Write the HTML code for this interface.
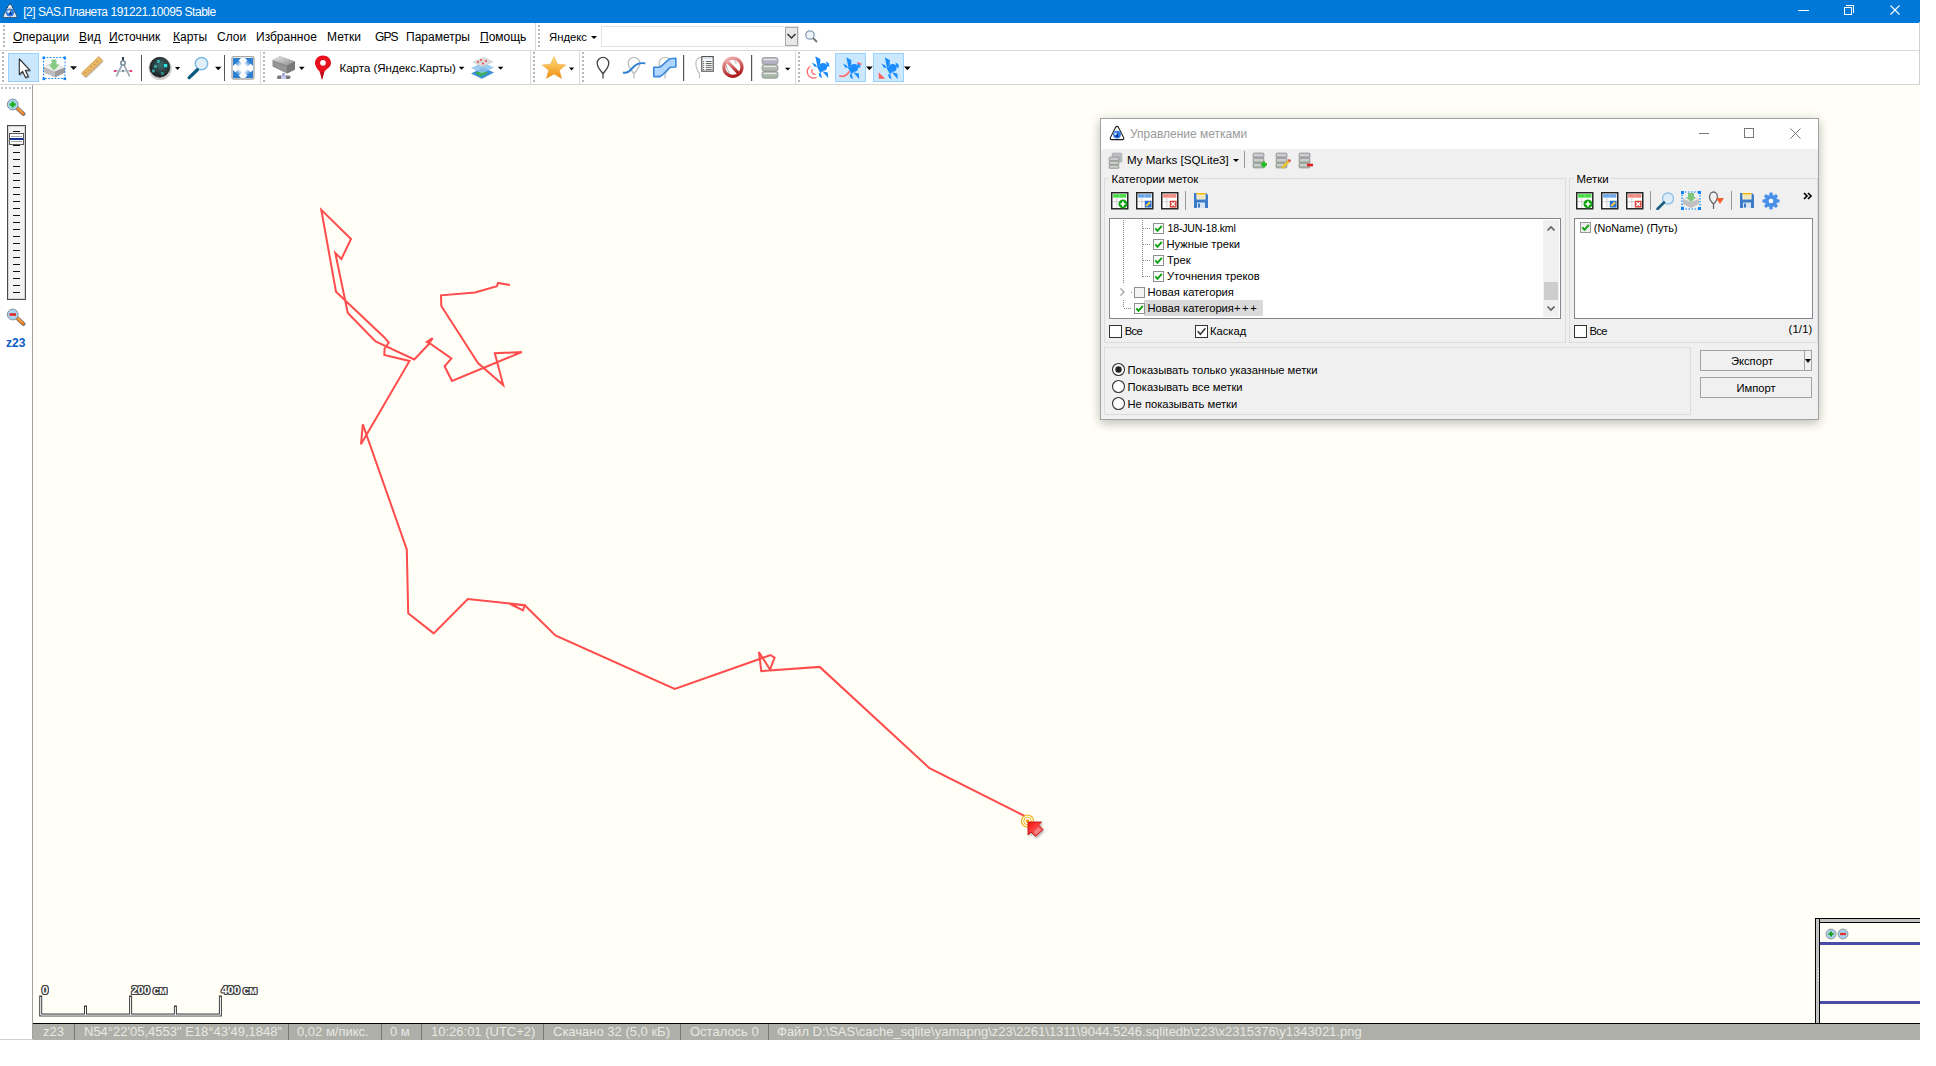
<!DOCTYPE html>
<html><head><meta charset="utf-8">
<style>
*{box-sizing:border-box;margin:0;padding:0}
html,body{width:1936px;height:1066px;overflow:hidden;background:#fff;font-family:"Liberation Sans",sans-serif;font-size:12px;color:#000}
.a{position:absolute}
.t{position:absolute;white-space:nowrap;line-height:1}
#title{left:0;top:0;width:1920px;height:23px;background:#0078d7}
#menu{left:0;top:23px;width:1920px;height:28px;background:#fff;border-bottom:1px solid #dadada}
#tb{left:0;top:51px;width:1920px;height:34px;background:#fff;border-bottom:1px solid #d5d5d5}
#lp{left:0;top:85px;width:33px;height:955px;background:#fff;border-right:1px solid #a0a0a0}
#map{left:33px;top:85px;width:1887px;height:939px;background:#fffef7;overflow:hidden}
#status{left:33px;top:1023px;width:1887px;height:17px;background:#aeafa8;border-top:1px solid #000;overflow:hidden}
.u{text-decoration:underline}
.grip{position:absolute;width:2px;background-image:linear-gradient(#b8b8b8 50%,transparent 50%);background-size:2px 4px}
.sep{position:absolute;width:1px;background:#8c8c8c}
.dd{position:absolute;width:0;height:0;border-left:3px solid transparent;border-right:3px solid transparent;border-top:3px solid #000}
</style></head><body>

<!-- Title bar -->
<div id="title" class="a">
  <svg class="a" style="left:2px;top:3px" width="16" height="16" viewBox="0 0 16 16"><path d="M6.6 2.2 Q8 0.6 9.4 2.2 L14.6 12.6 Q15.2 14.6 13.4 14.6 L2.6 14.6 Q0.8 14.6 1.4 12.6 Z" fill="#dfe9f5" stroke="#2a2a2a" stroke-width="1" stroke-dasharray="1.2 0.6"/><circle cx="8" cy="9.4" r="4" fill="#2f7ae8"/><circle cx="6.6" cy="8.6" r="1.4" fill="#e8f2ff"/><path d="M7 11.5 L8.5 8.5 L10 11.5 Z" fill="#0a2a78"/><rect x="7.6" y="6.4" width="1.2" height="1.8" fill="#e0b030"/></svg>
  <div class="t" style="left:23.2px;top:6.1px;font-size:12px;letter-spacing:-0.46px;color:#fff">[2] SAS.Планета 191221.10095 Stable</div>
  <div class="a" style="left:1798px;top:10px;width:11px;height:1px;background:#fff"></div>
  <div class="a" style="left:1844px;top:7px;width:8px;height:8px;border:1px solid #fff"></div>
  <div class="a" style="left:1846px;top:5px;width:8px;height:8px;border-top:1px solid #fff;border-right:1px solid #fff"></div>
  <svg class="a" style="left:1890px;top:5px" width="10" height="10" viewBox="0 0 10 10"><path d="M0.5 0.5 L9.5 9.5 M9.5 0.5 L0.5 9.5" stroke="#fff" stroke-width="1.1"/></svg>
</div>

<!-- Menu bar -->
<div id="menu" class="a">
  <div class="grip" style="left:3px;top:2px;height:22px"></div>
  <div class="t" style="left:13px;top:8px"><span class="u">О</span>перации</div>
  <div class="t" style="left:79px;top:8px"><span class="u">В</span>ид</div>
  <div class="t" style="left:109px;top:8px"><span class="u">И</span>сточник</div>
  <div class="t" style="left:173px;top:8px"><span class="u">К</span>арты</div>
  <div class="t" style="left:217px;top:8px">Слои</div>
  <div class="t" style="left:256px;top:8px">Избранное</div>
  <div class="t" style="left:327px;top:8px">Метки</div>
  <div class="t" style="left:375px;top:8px;letter-spacing:-0.9px">GPS</div>
  <div class="t" style="left:406px;top:8px">Параметры</div>
  <div class="t" style="left:480px;top:8px"><span class="u">П</span>омощь</div>
  <div class="a" style="left:535px;top:0;width:1px;height:28px;background:#dadada"></div>
  <div class="grip" style="left:538px;top:2px;height:22px"></div>
  <div class="t" style="left:549px;top:8.6px;font-size:11.3px">Яндекс</div>
  <div class="dd" style="left:591px;top:13px"></div>
  <div class="a" style="left:601px;top:3px;width:198px;height:21px;border:1px solid #e3e3e3;background:#fff"></div>
  <div class="a" style="left:785px;top:4px;width:13px;height:19px;background:#e8e8e8;border:1px solid #a8a8a8"></div>
  <svg class="a" style="left:786px;top:9px" width="11" height="8"><path d="M1.5 2 L5.5 6 L9.5 2" fill="none" stroke="#333" stroke-width="1.5"/></svg>
  <svg class="a" style="left:804px;top:6px" width="15" height="15" viewBox="0 0 15 15"><circle cx="6" cy="6" r="4.2" fill="#eef3f8" stroke="#8aa0b8" stroke-width="1.3"/><path d="M9 9 L13 13" stroke="#777" stroke-width="2"/></svg>
</div>

<!-- Toolbar -->
<div id="tb" class="a">
<div class="grip" style="left:2px;top:1px;height:30px"></div>
<div class="a" style="left:8px;top:2px;width:31px;height:29px;background:#cce8ff;border:1px solid #99d1ff"></div>
<svg class="a" style="left:0;top:0" width="920" height="33" viewBox="0 51 920 33"><defs><filter id="sh" x="-20%" y="-20%" width="150%" height="150%"><feDropShadow dx="0.6" dy="0.8" stdDeviation="0.6" flood-opacity="0.35"/></filter><radialGradient id="gl" cx="0.55" cy="0.4" r="0.65"><stop offset="0" stop-color="#3d6e70"/><stop offset="0.6" stop-color="#2a3838"/><stop offset="1" stop-color="#151515"/></radialGradient><linearGradient id="st" x1="0" y1="0" x2="0" y2="1"><stop offset="0" stop-color="#ffe27a"/><stop offset="1" stop-color="#f28a12"/></linearGradient><linearGradient id="srv" x1="0" y1="0" x2="1" y2="1"><stop offset="0" stop-color="#e8e8e8"/><stop offset="1" stop-color="#8a8a8a"/></linearGradient><linearGradient id="nored" x1="0" y1="0" x2="0.3" y2="1"><stop offset="0" stop-color="#f4b0b0"/><stop offset="1" stop-color="#b02020"/></linearGradient><radialGradient id="exg" cx="0.5" cy="0.5" r="0.5"><stop offset="0.25" stop-color="#fff"/><stop offset="1" stop-color="#fff" stop-opacity="0"/></radialGradient><g id="sat" fill="#1a8cff"><path d="M11.3 4.3 L16.5 7.3 L16 12.8 L13.5 14.8 Z"/><path d="M8 10.6 L11.8 12.6 L13 15 L10.2 14.6 Z"/><circle cx="19.2" cy="14.8" r="3.9"/><path d="M22 9.3 L24.6 11.2 L25.6 14.2 L23 14.8 Z"/><path d="M18.2 19.2 L23.8 20.4 L24.3 26.3 Z"/><path d="M14.6 21 L17 21.6 L18 26.6 L15.4 24.2 Z"/><path d="M12.8 14.6 L16.4 13.6 L19.2 18.6 L16.4 21.2 Z"/></g></defs><path d="M19.3 59 L19.3 74.5 L22.6 71.4 L25.6 77.6 L28.2 76.4 L25.3 70.3 L29.8 70.1 Z" fill="#fff" stroke="#333" stroke-width="1.1" stroke-linejoin="round" filter="url(#sh)"/><path d="M43 66.5 L53 62.5 L65 67.5 L65 72.5 L55 77.5 L43 72 Z" fill="#bdbdbd"/><path d="M43 66.5 L53 62.5 L65 67.5 L55 71.5 Z" fill="#ececec"/><path d="M55 71.5 L65 67.5 L65 72.5 L55 77.5 Z" fill="#9c9c9c"/><path d="M51.5 59.5 L56.5 59.5 L56.5 64.5 L59.5 64.5 L54 70.5 L48.5 64.5 L51.5 64.5 Z" fill="#78c878" opacity="0.9"/><rect x="43.5" y="57.5" width="21.5" height="21" fill="none" stroke="#0a84ff" stroke-width="1" stroke-dasharray="1.6 1.6"/><rect x="42.5" y="56.5" width="2.6" height="2.6" fill="#0a84ff"/><rect x="63.5" y="56.5" width="2.6" height="2.6" fill="#0a84ff"/><rect x="42.5" y="77.5" width="2.6" height="2.6" fill="#0a84ff"/><rect x="63.5" y="77.5" width="2.6" height="2.6" fill="#0a84ff"/><path d="M70 66.3 L77 66.3 L73.5 70 Z" fill="#111"/><path d="M81.5 73 L98.8 56.6 L102.6 60.6 L85.3 77 Z" fill="#e8b866" stroke="#c89440" stroke-width="0.6" filter="url(#sh)"/><path d="M86 73.5 L84.5 72 M89 70.6 L88 69.6 M92 67.8 L90.5 66.3 M95 65 L94 64 M98 62.2 L96.5 60.7" stroke="#9a6a28" stroke-width="0.7"/><path d="M123 57 L123 60.5" stroke="#2a3a48" stroke-width="2"/><circle cx="123" cy="63" r="2.2" fill="none" stroke="#6f8795" stroke-width="1.5"/><path d="M122 65 L116.3 76.5 M124 65 L129.7 76.5" stroke="#8ea2ad" stroke-width="1.6"/><path d="M115 71 L131 71" stroke="#a5b3ba" stroke-width="1"/><rect x="113.8" y="70" width="2.6" height="2" fill="#e8407a"/><rect x="129.6" y="70" width="2.6" height="2" fill="#e8407a"/><circle cx="123" cy="71" r="1.2" fill="#7a8f9a"/><rect x="141" y="55" width="1" height="26" fill="#555"/><circle cx="160.2" cy="68.6" r="11.6" fill="#c4c4c4" opacity="0.85"/><circle cx="159.8" cy="67.6" r="10.6" fill="#eee"/><circle cx="159.8" cy="67.3" r="10" fill="url(#gl)" stroke="#222" stroke-width="0.8"/><rect x="157" y="60" width="2.8" height="2.8" fill="#3cb0b0"/><rect x="164" y="64" width="3.2" height="3.2" fill="#28e6e6"/><rect x="154" y="65" width="2.8" height="2.8" fill="#3aa8a8"/><rect x="152" y="69.5" width="2.8" height="2.8" fill="#38a0a0"/><rect x="161" y="72" width="2.8" height="2.8" fill="#2f8c8c"/><path d="M175 66.9 L180.2 66.9 L177.6 70 Z" fill="#000"/><circle cx="201.5" cy="63.6" r="6.2" fill="#e2eef8" stroke="#7cb8e4" stroke-width="1.5"/><path d="M197.4 69.7 L189.2 77.6" stroke="#0b5a80" stroke-width="3.4" stroke-linecap="round"/><path d="M215 66.8 L221.5 66.8 L218.2 70.2 Z" fill="#000"/><rect x="224" y="55" width="1" height="26" fill="#555"/><rect x="232" y="56.6" width="22" height="22.4" rx="1.5" fill="#fff" stroke="#a8a8a8" stroke-width="1.3"/><defs><linearGradient id="exc" x1="0" y1="0" x2="1" y2="1"><stop offset="0.38" stop-color="#2d7fd0"/><stop offset="0.8" stop-color="#2d7fd0" stop-opacity="0"/></linearGradient><path id="exa" d="M0 0 L8 0 L5.8 2.4 L9.6 6.2 L6.2 9.6 L2.4 5.8 L0 8 Z" fill="url(#exc)"/></defs><rect x="233" y="58" width="20" height="20" fill="#fff"/><use href="#exa" transform="translate(233,58)"/><use href="#exa" transform="translate(253,58) scale(-1,1)"/><use href="#exa" transform="translate(233,78) scale(1,-1)"/><use href="#exa" transform="translate(253,78) scale(-1,-1)"/><rect x="260" y="51" width="1" height="33" fill="#dadada"/><path d="M272.5 60 L280 56.3 L295 61.5 L295 69.5 L287 73.5 L272.5 66.5 Z" fill="#8d8d8d"/><path d="M272.5 60 L280 56.3 L295 61.5 L287 65.5 Z" fill="url(#srv)"/><path d="M287 65.5 L295 61.5 L295 69.5 L287 73.5 Z" fill="#7a7a7a"/><path d="M273.5 62.5 L286 68.5 M273.5 64.5 L286 70.5" stroke="#aaa" stroke-width="0.6"/><path d="M283.5 73 L283.5 76" stroke="#9a9ae0" stroke-width="2.4"/><rect x="277" y="75.5" width="13.5" height="3.5" rx="1.6" fill="#7a7a7a"/><rect x="281" y="75.5" width="5" height="3.5" fill="#c8c8f4"/><path d="M299 66.8 L304.6 66.8 L301.8 70 Z" fill="#000"/><path d="M323 55.6 C318.3 55.6 315 59 315 63.2 C315 66.5 317.5 69 319.5 71.5 L322 79.8 L324.5 71.2 C327.5 68.5 331 66.5 331 63 C331 59 327.6 55.6 323 55.6 Z" fill="#e8101e"/><circle cx="323" cy="62.8" r="2.9" fill="#fff"/><path d="M320.5 72.5 L322 79.8 L324.5 71.2 Z" fill="#b01020"/><path d="M458.8 66.8 L464.4 66.8 L461.6 69.8 Z" fill="#000"/><path d="M471 73.5 L483 67.5 L494 72.5 L482 78.8 Z" fill="#3a8fd8"/><path d="M475 73 L482 70 L488 72.8 L481 76.5 Z" fill="#3cae4c"/><path d="M471 68 L483 62.5 L494 67.5 L482 73.5 Z" fill="#8ac4ee" opacity="0.85"/><path d="M473 62 L484 57.5 L493 61.8 L482 66.8 Z" fill="#dadada" stroke="#c0c0c0" stroke-width="0.5"/><circle cx="481" cy="60" r="0.9" fill="#e33"/><circle cx="486" cy="61" r="0.9" fill="#e33"/><circle cx="483" cy="63.5" r="0.9" fill="#e33"/><circle cx="478" cy="62" r="0.9" fill="#e33"/><path d="M497.8 66.8 L503.4 66.8 L500.6 69.8 Z" fill="#000"/><rect x="530" y="51" width="1" height="33" fill="#dadada"/><path d="M554 56.6 L557.4 64.2 L565.8 64.9 L559.4 70.3 L561.6 78.6 L554 74 L546.4 78.6 L548.6 70.3 L542.2 64.9 L550.6 64.2 Z" fill="url(#st)" stroke="#e8a030" stroke-width="0.5"/><path d="M569 67.6 L574.2 67.6 L571.6 70.4 Z" fill="#000"/><rect x="579" y="51" width="1" height="33" fill="#dadada"/><path d="M603 78.5 L603 74 C601.5 71 597.2 68 597.2 63.2 C597.2 59.8 600 57.4 603 57.4 C606 57.4 608.8 59.8 608.8 63.2 C608.8 68 604.5 71 603 74" fill="none" stroke="#444" stroke-width="1.3"/><path d="M634 78.5 L634 74 C632.5 71 628.2 68 628.2 63.2 C628.2 59.8 631 57.4 634 57.4 C637 57.4 639.8 59.8 639.8 63.2 C639.8 68 635.5 71 634 74" fill="none" stroke="#bdbdbd" stroke-width="1.3"/><path d="M623 72.3 C626 73.8 628.5 72.5 632 68.5 C635.5 64.5 638.5 62.4 645.3 63.4" fill="none" stroke="#2d7fd3" stroke-width="1.9"/><path d="M665 78.5 L665 74 C663.5 71 659.2 68 659.2 63.2 C659.2 59.8 662 57.4 665 57.4 C668 57.4 670.8 59.8 670.8 63.2 C670.8 68 666.5 71 665 74" fill="none" stroke="#c0c0c0" stroke-width="1.3"/><path d="M653.8 67.3 L659 67.3 C663 66 666.5 60.5 670 58.8 L675.8 58.2 L675.8 67 L670.5 67.3 C667 69 664 75.5 659.5 76.6 L653.8 76.6 Z" fill="#a8d2ff" fill-opacity="0.9" stroke="#3a88d8" stroke-width="1.6" stroke-linejoin="round"/><rect x="683" y="55" width="1.2" height="26" fill="#555"/><path d="M699.5 78.4 L699.5 73.5 C697 70.5 695.9 67.5 695.9 63.5 C695.9 60 697.5 57.6 701 57.3" fill="none" stroke="#c4c4c4" stroke-width="1.3"/><rect x="701.8" y="56.6" width="11.4" height="14.6" fill="#fff" stroke="#555" stroke-width="1.2"/><path d="M703.5 58.8 L711.5 58.8" stroke="#a8c8f0" stroke-width="0.6"/><path d="M703 61.5 L704.2 61.5 M705.8 61.5 L711.8 61.5" stroke="#555" stroke-width="0.9"/><path d="M703 63.5 L704.2 63.5 M705.8 63.5 L711.8 63.5" stroke="#555" stroke-width="0.9"/><path d="M703 65.4 L704.2 65.4 M705.8 65.4 L711.8 65.4" stroke="#555" stroke-width="0.9"/><path d="M703 67.4 L704.2 67.4 M705.8 67.4 L711.8 67.4" stroke="#555" stroke-width="0.9"/><path d="M703 69.4 L704.2 69.4 M705.8 69.4 L711.8 69.4" stroke="#555" stroke-width="0.9"/><path d="M729 76 L729 72 C727 69.5 726 67 726 64 C726 61 728 58.8 731 58.8 C734 58.8 736 61 736 64" fill="none" stroke="#c8c8c8" stroke-width="1.4"/><circle cx="732.9" cy="67.3" r="9.1" fill="none" stroke="url(#nored)" stroke-width="3.2"/><path d="M726.6 60.6 L739.2 74" stroke="url(#nored)" stroke-width="3.2"/><rect x="751" y="55" width="1.2" height="26" fill="#555"/><rect x="762" y="57.5" width="16" height="6.8" rx="2.2" fill="#b4b4c4" stroke="#8a8a8a" stroke-width="0.7"/><path d="M763.5 59.5 L776.5 59.5" stroke="#e6e6e6" stroke-width="1.4"/><rect x="762" y="64.5" width="16" height="6.8" rx="2.2" fill="#b0b6b0" stroke="#8a8a8a" stroke-width="0.7"/><path d="M763.5 66.5 L776.5 66.5" stroke="#e6e6e6" stroke-width="1.4"/><rect x="762" y="71.5" width="16" height="6.8" rx="2.2" fill="#a8b8a8" stroke="#8a8a8a" stroke-width="0.7"/><path d="M763.5 73.5 L776.5 73.5" stroke="#e6e6e6" stroke-width="1.4"/><path d="M785 67.8 L790.4 67.8 L787.7 70.6 Z" fill="#000"/><rect x="795" y="51" width="1" height="33" fill="#dadada"/><rect x="835.5" y="53.5" width="30" height="28" fill="#cce8ff" stroke="#99d1ff" stroke-width="1"/><rect x="873.5" y="53.5" width="30" height="28" fill="#cce8ff" stroke="#99d1ff" stroke-width="1"/><g transform="translate(804,52)"><use href="#sat"/><path d="M6.4 14.2 A6.2 6.2 0 0 0 12.6 25.2 M8.4 17.2 A3.4 3.4 0 0 0 11.6 22.4" fill="none" stroke="#ff6666" stroke-width="1.3"/></g><g transform="translate(835,53)"><use href="#sat"/><path d="M4.2 22.8 C8 24.3 12 22 14.5 18.2" fill="none" stroke="#ff6e6e" stroke-width="1.7"/><path d="M22.5 10.2 C24 10 25.5 10.6 26.3 11.8" fill="none" stroke="#ff6e6e" stroke-width="1.7"/></g><path d="M866 66.6 L872.8 66.6 L869.4 70.2 Z" fill="#000"/><g transform="translate(873.5,53)"><use href="#sat"/></g><path d="M878.7 72.3 L878.7 78.8 L885.2 78.8 Z" fill="#ff6060"/><path d="M904 66.6 L910.8 66.6 L907.4 70.2 Z" fill="#000"/></svg>
<div class="grip" style="left:263px;top:1px;height:30px"></div>
<div class="grip" style="left:533px;top:1px;height:30px"></div>
<div class="grip" style="left:582px;top:1px;height:30px"></div>
<div class="grip" style="left:798px;top:1px;height:30px"></div>
<div class="t" style="left:339.5px;top:12px;font-size:11.5px">Карта (Яндекс.Карты)</div>
</div>
<!-- Left panel -->
<div id="lp" class="a">
  <div class="a" style="left:1px;top:2px;width:30px;height:2px;background-image:linear-gradient(90deg,#c4c4c4 50%,transparent 50%);background-size:4px 2px"></div>
  <svg class="a" style="left:6px;top:12px" width="20" height="20" viewBox="0 0 20 20"><path d="M10.5 10.5 L17.5 17" stroke="#777" stroke-width="4" stroke-linecap="round"/><path d="M10.8 10.8 L17.2 16.7" stroke="#f07a20" stroke-width="2.6" stroke-linecap="round"/><path d="M11.5 11 L16.5 15.6" stroke="#ffd060" stroke-width="0.9"/><circle cx="6.7" cy="7.5" r="5.4" fill="#a9d6f0" stroke="#7d8f9a" stroke-width="1"/><path d="M3.6 7.5 L9.8 7.5 M6.7 4.4 L6.7 10.6" stroke="#22b022" stroke-width="2.4"/></svg>
  <div class="a" style="left:7px;top:40px;width:19px;height:175px;border:1px solid #4a4a4a;box-shadow:inset 0 0 0 1px #d6d6d6;background:#f3f3f3"></div>
  <div class="a" style="left:13px;top:46px;width:7px;height:168px;background-image:linear-gradient(#111 1.5px,transparent 1.5px);background-size:7px 7px"></div>
  <div class="a" style="left:9px;top:48px;width:15px;height:12px;background:#fbfbfb;border:1px solid #555"></div>
  <div class="a" style="left:11px;top:51px;width:11px;height:1px;background:#a8a8a8"></div>
  <div class="a" style="left:10px;top:53px;width:13px;height:2px;background:#14349a"></div>
  <div class="a" style="left:11px;top:56px;width:11px;height:1px;background:#a8a8a8"></div>
  <svg class="a" style="left:6px;top:221.5px" width="20" height="20" viewBox="0 0 20 20"><path d="M10.5 10.5 L17.5 17" stroke="#777" stroke-width="4" stroke-linecap="round"/><path d="M10.8 10.8 L17.2 16.7" stroke="#f07a20" stroke-width="2.6" stroke-linecap="round"/><path d="M11.5 11 L16.5 15.6" stroke="#ffd060" stroke-width="0.9"/><circle cx="6.7" cy="7.5" r="5.4" fill="#a9d6f0" stroke="#7d8f9a" stroke-width="1"/><path d="M3.4 7.5 L10 7.5" stroke="#e02828" stroke-width="2.6"/></svg>
  <div class="t" style="left:6px;top:252px;font-size:12px;font-weight:bold;color:#0a5bc4">z23</div>
</div>

<!-- Map -->
<div id="map" class="a">
  <svg class="a" style="left:0;top:0" width="1887" height="938"><polyline points="477.0,200.0 465.0,198.0 464.0,201.3 442.0,207.5 408.0,210.3 408.3,221.0 445.0,278.0 470.2,300.0 461.8,268.3 488.8,267.0 419.0,296.0 411.6,281.3 418.4,273.4 396.4,258.0 399.6,253.2 393.8,257.0 396.4,258.5 381.3,274.5 342.6,256.4 314.8,228.0 302.3,168.0 308.4,174.0 318.0,154.0 288.3,124.8 303.0,206.8 350.9,251.9 355.8,257.5 351.6,263.5 351.3,270.0 376.5,276.0 328.0,359.3 329.8,339.3 373.8,464.5 375.2,528.3 400.7,548.4 434.8,514.0 491.7,520.0 490.0,525.3 476.2,518.5 492.0,520.5 522.4,550.4 641.7,603.9 725.9,574.3 737.5,570.0 741.6,572.6 737.0,584.6 725.9,567.0 728.3,586.1 786.7,581.9 896.5,683.2 991.5,731.0" fill="none" stroke="#ff4c4c" stroke-width="2" stroke-linejoin="miter" stroke-miterlimit="4"/>
  <g transform="translate(994.5,736.0)"><circle cx="0" cy="0" r="6" fill="none" stroke="#f0b020" stroke-width="1.2"/><circle cx="0" cy="0" r="3.8" fill="none" stroke="#f0b020" stroke-width="1"/><circle cx="0" cy="0" r="1.8" fill="#f5a000"/></g>
  <g transform="translate(994.0,736.0)"><defs><filter id="ash" x="-30%" y="-30%" width="180%" height="180%"><feDropShadow dx="1.2" dy="1.5" stdDeviation="1" flood-color="#000" flood-opacity="0.3"/></filter><linearGradient id="ag" x1="0" y1="0" x2="1" y2="1"><stop offset="0" stop-color="#ff1010"/><stop offset="1" stop-color="#f07878"/></linearGradient></defs><path d="M1 1 L14.5 1 L11.5 4 L16 8.5 L8.5 15.5 L4 11 L1 14 Z" fill="url(#ag)" stroke="#c41010" stroke-width="0.9" filter="url(#ash)"/><path d="M6.5 11 L11.5 6 L14.2 8.7 L9.2 13.7 Z" fill="#f4a0a0" opacity="0.6"/></g>
  </svg>
  <svg class="a" style="left:5px;top:909px" width="190" height="25" viewBox="0 0 190 25"><path d="M2.7 3 L2.7 21.1 L182.4 21.1 L182.4 3 M47.5 21.1 L47.5 13 M92.6 21.1 L92.6 3 M137.4 21.1 L137.4 13" fill="none" stroke="#404040" stroke-width="3" stroke-linecap="square"/><path d="M2.7 3 L2.7 21.1 L182.4 21.1 L182.4 3 M47.5 21.1 L47.5 13 M92.6 21.1 L92.6 3 M137.4 21.1 L137.4 13" fill="none" stroke="#fff" stroke-width="1"/></svg>
  <div class="t" style="left:9px;top:899.5px;font-size:11px;font-weight:bold;color:#fff;text-shadow:1px 0 #404040,-1px 0 #404040,0 1px #404040,0 -1px #404040,1px 1px #404040,-1px -1px #404040,1px -1px #404040,-1px 1px #404040">0</div>
  <div class="t" style="left:98.5px;top:899.5px;font-size:11px;font-weight:bold;color:#fff;text-shadow:1px 0 #404040,-1px 0 #404040,0 1px #404040,0 -1px #404040,1px 1px #404040,-1px -1px #404040,1px -1px #404040,-1px 1px #404040">200 см</div>
  <div class="t" style="left:188.5px;top:899.5px;font-size:11px;font-weight:bold;color:#fff;text-shadow:1px 0 #404040,-1px 0 #404040,0 1px #404040,0 -1px #404040,1px 1px #404040,-1px -1px #404040,1px -1px #404040,-1px 1px #404040">400 см</div>
  <div class="a" style="left:1782px;top:833px;width:105px;height:105px;background:#fffef7;border-top:1px solid #000;border-left:1px solid #000">
    <div class="a" style="left:0;top:0;width:104px;height:4px;background:#c4c4c4;border-bottom:1px solid #000"></div>
    <div class="a" style="left:0;top:0;width:4px;height:104px;background:#c4c4c4;border-right:1px solid #000"></div><div class="a" style="left:1.5px;top:49px;width:1px;height:13px;background-image:linear-gradient(#fff 50%,transparent 50%);background-size:1px 3px"></div>
    <svg class="a" style="left:9px;top:9px" width="24" height="12" viewBox="0 0 24 12"><circle cx="6" cy="6" r="5" fill="#a8d0e8" stroke="#888" stroke-width="0.8"/><path d="M3.5 6 L8.5 6 M6 3.5 L6 8.5" stroke="#20a020" stroke-width="2"/><circle cx="18" cy="6" r="5" fill="#a8d0e8" stroke="#888" stroke-width="0.8"/><path d="M15 6 L21 6" stroke="#e03030" stroke-width="2.2"/></svg>
    <div class="a" style="left:4px;top:23px;width:101px;height:3px;background:#4b4ba8"></div>
    <div class="a" style="left:4px;top:82px;width:101px;height:3px;background:#4b4ba8"></div>
  </div>
</div>

<!-- Status bar -->
<div id="status" class="a" style="font-size:13px;color:#e8e8e4">
  <div class="t" style="left:10px;top:1.3px">z23</div>
  <div class="a" style="left:41px;top:0;width:1px;height:16px;background:#777"></div>
  <div class="t" style="left:51px;top:1.3px">N54°22'05,4553" E18°43'49,1848"</div>
  <div class="a" style="left:255px;top:0;width:1px;height:16px;background:#777"></div>
  <div class="t" style="left:264px;top:1.3px">0,02 м/пикс.</div>
  <div class="a" style="left:348px;top:0;width:1px;height:16px;background:#777"></div>
  <div class="t" style="left:357px;top:1.3px">0 м</div>
  <div class="a" style="left:388px;top:0;width:1px;height:16px;background:#777"></div>
  <div class="t" style="left:398px;top:1.3px">10:26:01 (UTC+2)</div>
  <div class="a" style="left:510px;top:0;width:1px;height:16px;background:#777"></div>
  <div class="t" style="left:520px;top:1.3px">Скачано 32 (5,0 кБ)</div>
  <div class="a" style="left:647px;top:0;width:1px;height:16px;background:#777"></div>
  <div class="t" style="left:657px;top:1.3px">Осталось 0</div>
  <div class="a" style="left:735px;top:0;width:1px;height:16px;background:#777"></div>
  <div class="t" style="left:744px;top:1.3px">Файл D:\SAS\cache_sqlite\yamapng\z23\2261\1311\9044.5246.sqlitedb\z23\x2315376\y1343021.png</div>
</div>
<div class="a" style="left:0;top:1039px;width:33px;height:1px;background:#d0d0d0"></div>
<div class="a" style="left:1919px;top:22px;width:1px;height:63px;background:#d0d0d0"></div>


<!-- Dialog -->
<div class="a" style="left:1100px;top:118px;width:719px;height:302px;background:#f0f0f0;border:1px solid #a2a29e;box-shadow:0 4px 10px rgba(0,0,0,0.2),0 0 12px rgba(0,0,0,0.08)">
<div class="a" style="left:0;top:0;width:717px;height:30px;background:#fff"></div>
</div>
<svg class="a" style="left:1109px;top:125px" width="16" height="16" viewBox="0 0 16 16"><path d="M6.6 2.2 Q8 0.6 9.4 2.2 L14.6 12.6 Q15.2 14.6 13.4 14.6 L2.6 14.6 Q0.8 14.6 1.4 12.6 Z" fill="#fff" stroke="#1a1a1a" stroke-width="1.1"/><circle cx="8" cy="9.6" r="3.9" fill="#2f7ae8"/><circle cx="6.6" cy="8.8" r="1.3" fill="#cfe2ff"/><path d="M6.6 12 L8.2 8.6 L9.8 12 Z" fill="#0a2a78"/></svg>
<div class="t" style="left:1130px;top:127.8px;font-size:12px;color:#9a9a9a;">Управление метками</div>
<div class="a" style="left:1699px;top:133px;width:10px;height:1px;background:#777"></div>
<div class="a" style="left:1744px;top:128px;width:10px;height:10px;border:1px solid #777"></div>
<svg class="a" style="left:1790px;top:128px" width="11" height="11" viewBox="0 0 11 11"><path d="M0.5 0.5 L10.5 10.5 M10.5 0.5 L0.5 10.5" stroke="#777" stroke-width="1"/></svg>
<svg class="a" style="left:1108px;top:152px" width="15" height="17" viewBox="0 0 15 17"><g opacity="0.9"><rect x="4" y="1" width="10" height="4.5" rx="1" fill="#b8b8c0" stroke="#999" stroke-width="0.5"/><rect x="4" y="5.5" width="10" height="4.5" rx="1" fill="#b0b8b0" stroke="#999" stroke-width="0.5"/></g><rect x="1" y="5" width="10" height="4" rx="1" fill="#b4b4bc" stroke="#888" stroke-width="0.5"/><rect x="1" y="9" width="10" height="4" rx="1" fill="#b0b6b0" stroke="#888" stroke-width="0.5"/><rect x="1" y="13" width="10" height="3.5" rx="1" fill="#aab4aa" stroke="#888" stroke-width="0.5"/><path d="M2 7 L10 7 M2 11 L10 11 M2 14.8 L10 14.8" stroke="#eee" stroke-width="0.8"/></svg>
<div class="t" style="left:1127px;top:153.7px;font-size:11.6px;color:#000;">My Marks [SQLite3]</div>
<div class="dd" style="left:1233px;top:159px;border-left-width:3px;border-right-width:3px;border-top-width:3px"></div>
<div class="a" style="left:1244px;top:151px;width:1px;height:17px;background:#999"></div>
<svg class="a" style="left:1252px;top:152px" width="16" height="17" viewBox="0 0 16 17"><rect x="1" y="1" width="11" height="5" rx="1.2" fill="#b4b4bc" stroke="#888" stroke-width="0.6"/><rect x="1" y="6" width="11" height="5" rx="1.2" fill="#b0b6b0" stroke="#888" stroke-width="0.6"/><rect x="1" y="11" width="11" height="5" rx="1.2" fill="#aab4aa" stroke="#888" stroke-width="0.6"/><path d="M2 3 L11 3 M2 8 L11 8 M2 13 L11 13" stroke="#e8e8e8" stroke-width="1"/><path d="M9 12.5 L15 12.5 M12 9.5 L12 15.5" stroke="#22bb22" stroke-width="2.6"/></svg>
<svg class="a" style="left:1275px;top:152px" width="16" height="17" viewBox="0 0 16 17"><rect x="1" y="1" width="11" height="5" rx="1.2" fill="#b4b4bc" stroke="#888" stroke-width="0.6"/><rect x="1" y="6" width="11" height="5" rx="1.2" fill="#b0b6b0" stroke="#888" stroke-width="0.6"/><rect x="1" y="11" width="11" height="5" rx="1.2" fill="#aab4aa" stroke="#888" stroke-width="0.6"/><path d="M2 3 L11 3 M2 8 L11 8 M2 13 L11 13" stroke="#e8e8e8" stroke-width="1"/><path d="M7 16 L14.5 8.5" stroke="#e8c030" stroke-width="2.6"/><path d="M13.5 7.5 L15.5 9.5" stroke="#e05050" stroke-width="2"/></svg>
<svg class="a" style="left:1298px;top:152px" width="16" height="17" viewBox="0 0 16 17"><rect x="1" y="1" width="11" height="5" rx="1.2" fill="#b4b4bc" stroke="#888" stroke-width="0.6"/><rect x="1" y="6" width="11" height="5" rx="1.2" fill="#b0b6b0" stroke="#888" stroke-width="0.6"/><rect x="1" y="11" width="11" height="5" rx="1.2" fill="#aab4aa" stroke="#888" stroke-width="0.6"/><path d="M2 3 L11 3 M2 8 L11 8 M2 13 L11 13" stroke="#e8e8e8" stroke-width="1"/><path d="M9 13 L15 13" stroke="#e02020" stroke-width="2.6"/></svg>
<div class="a" style="left:1104px;top:178px;width:462px;height:165px;border:1px solid #dcdcdc"></div>
<div class="a" style="left:1109px;top:174px;width:92px;height:10px;background:#f0f0f0"></div>
<div class="t" style="left:1111.5px;top:174.1px;font-size:11.4px;color:#000;">Категории меток</div>
<svg class="a" style="left:1111px;top:192px" width="17.5" height="17.5" viewBox="0 0 18 18"><rect x="0.75" y="0.75" width="16.5" height="16.5" fill="#fff" stroke="#222" stroke-width="1.5"/><rect x="2.2" y="2.2" width="13.6" height="3.6" fill="#44dd44"/><path d="M9 2.2 L9 5.8" stroke="#fff" stroke-opacity="0.35" stroke-width="0.8"/><path d="M6 6 L6 16 M2 10 L16 10" stroke="#ccc" stroke-width="1"/><circle cx="12.3" cy="12.3" r="4.6" fill="#10a010"/><path d="M9.8 12.3 L14.8 12.3 M12.3 9.8 L12.3 14.8" stroke="#fff" stroke-width="1.7"/></svg>
<svg class="a" style="left:1136px;top:192px" width="17.5" height="17.5" viewBox="0 0 18 18"><rect x="0.75" y="0.75" width="16.5" height="16.5" fill="#fff" stroke="#222" stroke-width="1.5"/><rect x="2.2" y="2.2" width="13.6" height="3.6" fill="#6aa6e8"/><path d="M9 2.2 L9 5.8" stroke="#fff" stroke-opacity="0.35" stroke-width="0.8"/><path d="M6 6 L6 16 M2 10 L16 10" stroke="#ccc" stroke-width="1"/><rect x="9" y="9" width="7" height="7" fill="#2d6fd0"/><path d="M10.5 14.5 L14.5 10.5" stroke="#f0d040" stroke-width="2"/></svg>
<svg class="a" style="left:1161px;top:192px" width="17.5" height="17.5" viewBox="0 0 18 18"><rect x="0.75" y="0.75" width="16.5" height="16.5" fill="#fff" stroke="#222" stroke-width="1.5"/><rect x="2.2" y="2.2" width="13.6" height="3.6" fill="#f08a80"/><path d="M9 2.2 L9 5.8" stroke="#fff" stroke-opacity="0.35" stroke-width="0.8"/><path d="M6 6 L6 16 M2 10 L16 10" stroke="#ccc" stroke-width="1"/><rect x="9" y="9" width="7" height="7" fill="#d83a30"/><path d="M10.5 10.5 L14.5 14.5 M14.5 10.5 L10.5 14.5" stroke="#fff" stroke-width="1.5"/></svg>
<div class="a" style="left:1185px;top:191px;width:1px;height:19px;background:#999"></div>
<svg class="a" style="left:1193px;top:192px" width="16" height="17" viewBox="0 0 16 17"><path d="M1 1 L13 1 L15 3 L15 16 L1 16 Z" fill="#3d7ac8"/><rect x="3.5" y="1" width="9" height="6.5" fill="#fffbe0"/><rect x="3.5" y="1" width="9" height="1.5" fill="#f4b400"/><path d="M4.5 4 L11.5 4 M4.5 6 L11.5 6" stroke="#d8c890" stroke-width="0.8"/><rect x="4" y="10.5" width="8" height="5.5" fill="#d8e6f4"/><rect x="5" y="11.5" width="2" height="4" fill="#3d7ac8"/></svg>
<div class="a" style="left:1109px;top:218px;width:452px;height:101px;background:#fff;border:1px solid #828790"></div>
<div class="a" style="left:1543px;top:220px;width:16px;height:97px;background:#f0f0f0"></div>
<svg class="a" style="left:1546px;top:225px" width="10" height="7" viewBox="0 0 10 7"><path d="M1.5 5.5 L5 2 L8.5 5.5" fill="none" stroke="#606060" stroke-width="1.6"/></svg>
<svg class="a" style="left:1546px;top:305px" width="10" height="7" viewBox="0 0 10 7"><path d="M1.5 1.5 L5 5 L8.5 1.5" fill="none" stroke="#606060" stroke-width="1.6"/></svg>
<div class="a" style="left:1544px;top:282px;width:14px;height:18px;background:#cdcdcd"></div>
<div class="a" style="left:1123px;top:220px;width:1px;height:63px;background-image:linear-gradient(#888 50%,transparent 50%);background-size:1px 2px"></div>
<div class="a" style="left:1142px;top:220px;width:1px;height:57px;background-image:linear-gradient(#888 50%,transparent 50%);background-size:1px 2px"></div>
<div class="a" style="left:1143px;top:228px;width:8px;height:1px;background-image:linear-gradient(90deg,#888 50%,transparent 50%);background-size:2px 1px"></div>
<div class="a" style="left:1143px;top:244px;width:8px;height:1px;background-image:linear-gradient(90deg,#888 50%,transparent 50%);background-size:2px 1px"></div>
<div class="a" style="left:1143px;top:260px;width:8px;height:1px;background-image:linear-gradient(90deg,#888 50%,transparent 50%);background-size:2px 1px"></div>
<div class="a" style="left:1143px;top:276px;width:8px;height:1px;background-image:linear-gradient(90deg,#888 50%,transparent 50%);background-size:2px 1px"></div>
<div class="a" style="left:1123px;top:300px;width:1px;height:8px;background-image:linear-gradient(#888 50%,transparent 50%);background-size:1px 2px"></div>
<div class="a" style="left:1124px;top:308px;width:8px;height:1px;background-image:linear-gradient(90deg,#888 50%,transparent 50%);background-size:2px 1px"></div>
<div class="a" style="left:1131px;top:292px;width:1px;height:1px;background:#888"></div>
<div class="a" style="left:1153px;top:223px;width:11px;height:11px;border:1px solid #8f8f8f;background:#fff"></div><svg class="a" style="left:1153px;top:223px" width="11" height="11" viewBox="0 0 11 11"><path d="M2.3 5.3 L4.5 7.8 L8.8 2.8" fill="none" stroke="#10a010" stroke-width="2"/></svg>
<div class="t" style="left:1167.5px;top:223.3px;font-size:10.6px;letter-spacing:-0.2px;color:#000;">18-JUN-18.kml</div>
<div class="a" style="left:1153px;top:239px;width:11px;height:11px;border:1px solid #8f8f8f;background:#fff"></div><svg class="a" style="left:1153px;top:239px" width="11" height="11" viewBox="0 0 11 11"><path d="M2.3 5.3 L4.5 7.8 L8.8 2.8" fill="none" stroke="#10a010" stroke-width="2"/></svg>
<div class="t" style="left:1166.5px;top:238.8px;font-size:11.2px;color:#000;">Нужные треки</div>
<div class="a" style="left:1153px;top:255px;width:11px;height:11px;border:1px solid #8f8f8f;background:#fff"></div><svg class="a" style="left:1153px;top:255px" width="11" height="11" viewBox="0 0 11 11"><path d="M2.3 5.3 L4.5 7.8 L8.8 2.8" fill="none" stroke="#10a010" stroke-width="2"/></svg>
<div class="t" style="left:1167px;top:254.8px;font-size:11.2px;color:#000;">Трек</div>
<div class="a" style="left:1153px;top:271px;width:11px;height:11px;border:1px solid #8f8f8f;background:#fff"></div><svg class="a" style="left:1153px;top:271px" width="11" height="11" viewBox="0 0 11 11"><path d="M2.3 5.3 L4.5 7.8 L8.8 2.8" fill="none" stroke="#10a010" stroke-width="2"/></svg>
<div class="t" style="left:1167px;top:270.8px;font-size:11.2px;color:#000;">Уточнения треков</div>
<svg class="a" style="left:1119px;top:287px" width="7" height="10" viewBox="0 0 7 10"><path d="M1.5 1.5 L5 5 L1.5 8.5" fill="none" stroke="#a0a0a0" stroke-width="1.3"/></svg>
<div class="a" style="left:1134px;top:287px;width:11px;height:11px;border:1px solid #8f8f8f;background:#f4f4f4"></div>
<div class="t" style="left:1147.5px;top:287.0px;font-size:11.2px;color:#000;">Новая категория</div>
<div class="a" style="left:1144px;top:300px;width:119px;height:16px;background:#d9d9d9"></div>
<div class="a" style="left:1134px;top:303px;width:11px;height:11px;border:1px solid #8f8f8f;background:#fff"></div><svg class="a" style="left:1134px;top:303px" width="11" height="11" viewBox="0 0 11 11"><path d="M2.3 5.3 L4.5 7.8 L8.8 2.8" fill="none" stroke="#10a010" stroke-width="2"/></svg>
<div class="t" style="left:1147.5px;top:303.0px;font-size:11.2px;color:#000;">Новая категория<span style="letter-spacing:1.6px">+++</span></div>
<div class="a" style="left:1109px;top:325px;width:13px;height:13px;border:1px solid #333;background:#fff"></div>
<div class="t" style="left:1124.7px;top:326.0px;font-size:11.2px;letter-spacing:-0.6px;color:#000;">Все</div>
<div class="a" style="left:1195px;top:325px;width:13px;height:13px;border:1px solid #333;background:#fff"></div><svg class="a" style="left:1195px;top:325px" width="13" height="13" viewBox="0 0 11 11"><path d="M2.3 5.3 L4.5 7.8 L8.8 2.8" fill="none" stroke="#333" stroke-width="1.3"/></svg>
<div class="t" style="left:1210px;top:326.0px;font-size:11.2px;color:#000;">Каскад</div>
<div class="a" style="left:1569px;top:178px;width:249px;height:165px;border:1px solid #dcdcdc"></div>
<div class="a" style="left:1574px;top:174px;width:36px;height:10px;background:#f0f0f0"></div>
<div class="t" style="left:1576.5px;top:174.1px;font-size:11.4px;color:#000;">Метки</div>
<svg class="a" style="left:1576px;top:192px" width="17.5" height="17.5" viewBox="0 0 18 18"><rect x="0.75" y="0.75" width="16.5" height="16.5" fill="#fff" stroke="#222" stroke-width="1.5"/><rect x="2.2" y="2.2" width="13.6" height="3.6" fill="#44dd44"/><path d="M9 2.2 L9 5.8" stroke="#fff" stroke-opacity="0.35" stroke-width="0.8"/><path d="M6 6 L6 16 M2 10 L16 10" stroke="#ccc" stroke-width="1"/><circle cx="12.3" cy="12.3" r="4.6" fill="#10a010"/><path d="M9.8 12.3 L14.8 12.3 M12.3 9.8 L12.3 14.8" stroke="#fff" stroke-width="1.7"/></svg>
<svg class="a" style="left:1601px;top:192px" width="17.5" height="17.5" viewBox="0 0 18 18"><rect x="0.75" y="0.75" width="16.5" height="16.5" fill="#fff" stroke="#222" stroke-width="1.5"/><rect x="2.2" y="2.2" width="13.6" height="3.6" fill="#6aa6e8"/><path d="M9 2.2 L9 5.8" stroke="#fff" stroke-opacity="0.35" stroke-width="0.8"/><path d="M6 6 L6 16 M2 10 L16 10" stroke="#ccc" stroke-width="1"/><rect x="9" y="9" width="7" height="7" fill="#2d6fd0"/><path d="M10.5 14.5 L14.5 10.5" stroke="#f0d040" stroke-width="2"/></svg>
<svg class="a" style="left:1626px;top:192px" width="17.5" height="17.5" viewBox="0 0 18 18"><rect x="0.75" y="0.75" width="16.5" height="16.5" fill="#fff" stroke="#222" stroke-width="1.5"/><rect x="2.2" y="2.2" width="13.6" height="3.6" fill="#f08a80"/><path d="M9 2.2 L9 5.8" stroke="#fff" stroke-opacity="0.35" stroke-width="0.8"/><path d="M6 6 L6 16 M2 10 L16 10" stroke="#ccc" stroke-width="1"/><rect x="9" y="9" width="7" height="7" fill="#d83a30"/><path d="M10.5 10.5 L14.5 14.5 M14.5 10.5 L10.5 14.5" stroke="#fff" stroke-width="1.5"/></svg>
<div class="a" style="left:1650px;top:191px;width:1px;height:19px;background:#999"></div>
<svg class="a" style="left:1655px;top:191px" width="21" height="19" viewBox="0 0 21 19"><circle cx="13" cy="7.5" r="5.5" fill="#dcecf8" stroke="#8ec3e8" stroke-width="1.4"/><path d="M9 11.5 L2.5 18" stroke="#1d5f82" stroke-width="2.6" stroke-linecap="round"/></svg>
<svg class="a" style="left:1681px;top:191px" width="20" height="19" viewBox="0 0 20 19"><path d="M2 8 L10 5 L18 8 L18 13 L10 17 L2 13 Z" fill="#c0c0c0"/><path d="M2 8 L10 5 L18 8 L10 11 Z" fill="#e6e6e6"/><path d="M7 2 L13 2 L13 6 L15 6 L10 11 L5 6 L7 6 Z" fill="#7cc77c"/><rect x="1" y="1" width="18" height="17" fill="none" stroke="#0a84ff" stroke-width="1.2" stroke-dasharray="1.5 1.5"/><rect x="0" y="0" width="3" height="3" fill="#0a84ff"/><rect x="17" y="0" width="3" height="3" fill="#0a84ff"/><rect x="0" y="16" width="3" height="3" fill="#0a84ff"/><rect x="17" y="16" width="3" height="3" fill="#0a84ff"/></svg>
<svg class="a" style="left:1708px;top:191px" width="17" height="19" viewBox="0 0 17 19"><path d="M5.5 18 L5.5 13 C3 10.5 1.5 8.5 1.5 6 C1.5 3 3.3 1 5.5 1 C7.7 1 9.5 3 9.5 6 C9.5 8.5 8 10.5 5.5 13" fill="none" stroke="#666" stroke-width="1.3"/><path d="M8 7 L16 7 L12 13 Z" fill="#f06030"/></svg>
<div class="a" style="left:1731px;top:191px;width:1px;height:19px;background:#999"></div>
<svg class="a" style="left:1739px;top:192px" width="16" height="17" viewBox="0 0 16 17"><path d="M1 1 L13 1 L15 3 L15 16 L1 16 Z" fill="#3d7ac8"/><rect x="3.5" y="1" width="9" height="6.5" fill="#fffbe0"/><rect x="3.5" y="1" width="9" height="1.5" fill="#f4b400"/><path d="M4.5 4 L11.5 4 M4.5 6 L11.5 6" stroke="#d8c890" stroke-width="0.8"/><rect x="4" y="10.5" width="8" height="5.5" fill="#d8e6f4"/><rect x="5" y="11.5" width="2" height="4" fill="#3d7ac8"/></svg>
<svg class="a" style="left:1762px;top:192px" width="18" height="18" viewBox="0 0 18 18"><g fill="#4a90e8"><circle cx="9" cy="9" r="6.2"/><rect x="7.3" y="0.5" width="3.4" height="17" rx="1"/><rect x="0.5" y="7.3" width="17" height="3.4" rx="1"/><rect x="7.3" y="0.5" width="3.4" height="17" rx="1" transform="rotate(45 9 9)"/><rect x="7.3" y="0.5" width="3.4" height="17" rx="1" transform="rotate(-45 9 9)"/></g><circle cx="9" cy="9" r="2.3" fill="#fff"/></svg>
<svg class="a" style="left:1803px;top:192px" width="10" height="8" viewBox="0 0 10 8"><path d="M1 1 L4 4 L1 7 M5 1 L8 4 L5 7" fill="none" stroke="#000" stroke-width="1.7"/></svg>
<div class="a" style="left:1574px;top:218px;width:239px;height:101px;background:#fff;border:1px solid #828790"></div>
<div class="a" style="left:1580px;top:222px;width:11px;height:11px;border:1px solid #999;background:#eeeeee"></div><svg class="a" style="left:1580px;top:222px" width="11" height="11" viewBox="0 0 11 11"><path d="M2.3 5.3 L4.5 7.8 L8.8 2.8" fill="none" stroke="#10a010" stroke-width="2"/></svg>
<div class="t" style="left:1593.8px;top:222.8px;font-size:10.8px;color:#000;">(NoName) (Путь)</div>
<div class="a" style="left:1574px;top:325px;width:13px;height:13px;border:1px solid #333;background:#fff"></div>
<div class="t" style="left:1589.4px;top:326.0px;font-size:11.2px;letter-spacing:-0.6px;color:#000;">Все</div>
<div class="t" style="left:1788.5px;top:323.6px;font-size:11.2px;letter-spacing:0.2px">(1/1)</div>
<div class="a" style="left:1104px;top:347px;width:587px;height:68px;border:1px solid #dcdcdc"></div>
<svg class="a" style="left:1111px;top:362.2px" width="15" height="15" viewBox="0 0 15 15"><circle cx="7.5" cy="7.5" r="6" fill="#fff" stroke="#333" stroke-width="1.1"/><circle cx="7.5" cy="7.5" r="3.2" fill="#222"/></svg>
<div class="t" style="left:1127.5px;top:364.8px;font-size:11.2px;color:#000;">Показывать только указанные метки</div>
<svg class="a" style="left:1111px;top:379.2px" width="15" height="15" viewBox="0 0 15 15"><circle cx="7.5" cy="7.5" r="6" fill="#fff" stroke="#333" stroke-width="1.1"/></svg>
<div class="t" style="left:1127.5px;top:381.8px;font-size:11.2px;color:#000;">Показывать все метки</div>
<svg class="a" style="left:1111px;top:396.2px" width="15" height="15" viewBox="0 0 15 15"><circle cx="7.5" cy="7.5" r="6" fill="#fff" stroke="#333" stroke-width="1.1"/></svg>
<div class="t" style="left:1127.5px;top:398.8px;font-size:11.2px;color:#000;">Не показывать метки</div>
<div class="a" style="left:1700px;top:350px;width:112px;height:21px;background:#f0f0f0;border:1px solid #a3a3a3"></div>
<div class="a" style="left:1804px;top:351px;width:1px;height:19px;background:#a3a3a3"></div>
<div class="dd" style="left:1805px;top:359px;border-left-width:3.5px;border-right-width:3.5px;border-top-width:4px"></div>
<div class="t" style="left:1700px;top:356px;width:104px;text-align:center;font-size:11.2px">Экспорт</div>
<div class="a" style="left:1700px;top:377px;width:112px;height:21px;background:#f0f0f0;border:1px solid #a3a3a3"></div>
<div class="t" style="left:1700px;top:383px;width:112px;text-align:center;font-size:11.2px">Импорт</div>
</body></html>
